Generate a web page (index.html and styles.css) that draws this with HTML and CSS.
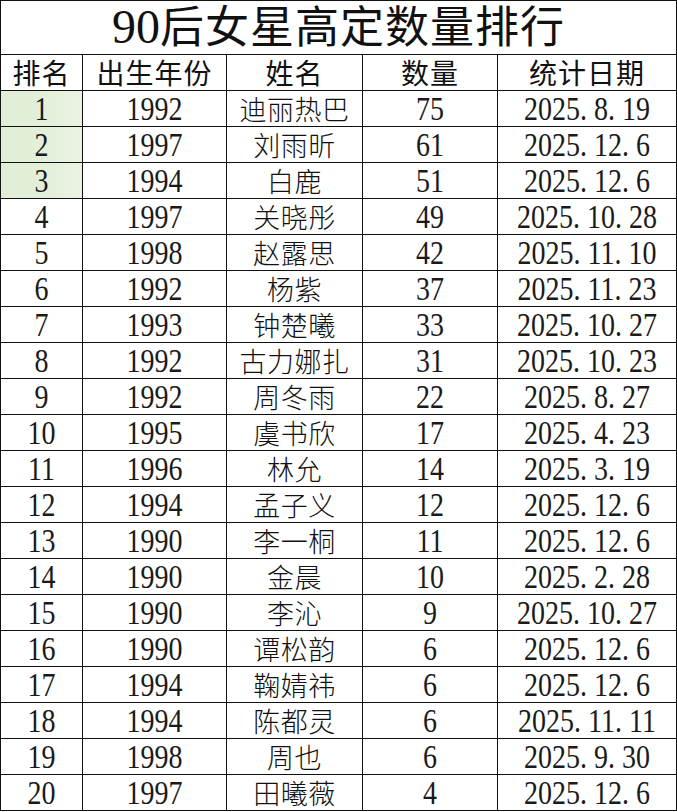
FILE: index.html
```html
<!DOCTYPE html>
<html lang="zh-CN">
<head>
<meta charset="utf-8">
<title>90后女星高定数量排行</title>
<link rel="stylesheet" href="styles.css">
</head>
<body>
<table class="rank">
  <colgroup>
    <col class="c-rank"><col class="c-year"><col class="c-name"><col class="c-count"><col class="c-date">
  </colgroup>
  <tr class="title-row"><td colspan="5" class="title"><span class="tnum">90</span>后女星高定数量排行</td></tr>
  <tr class="head"><th>排名</th><th>出生年份</th><th>姓名</th><th>数量</th><th>统计日期</th></tr>
  <tr><td class="hl"><span class="n">1</span></td><td><span class="n">1992</span></td><td class="nm">迪丽热巴</td><td><span class="n">75</span></td><td><span class="n">2025. 8. 19</span></td></tr>
  <tr><td class="hl"><span class="n">2</span></td><td><span class="n">1997</span></td><td class="nm">刘雨昕</td><td><span class="n">61</span></td><td><span class="n">2025. 12. 6</span></td></tr>
  <tr><td class="hl"><span class="n">3</span></td><td><span class="n">1994</span></td><td class="nm">白鹿</td><td><span class="n">51</span></td><td><span class="n">2025. 12. 6</span></td></tr>
  <tr><td><span class="n">4</span></td><td><span class="n">1997</span></td><td class="nm">关晓彤</td><td><span class="n">49</span></td><td><span class="n">2025. 10. 28</span></td></tr>
  <tr><td><span class="n">5</span></td><td><span class="n">1998</span></td><td class="nm">赵露思</td><td><span class="n">42</span></td><td><span class="n">2025. 11. 10</span></td></tr>
  <tr><td><span class="n">6</span></td><td><span class="n">1992</span></td><td class="nm">杨紫</td><td><span class="n">37</span></td><td><span class="n">2025. 11. 23</span></td></tr>
  <tr><td><span class="n">7</span></td><td><span class="n">1993</span></td><td class="nm">钟楚曦</td><td><span class="n">33</span></td><td><span class="n">2025. 10. 27</span></td></tr>
  <tr><td><span class="n">8</span></td><td><span class="n">1992</span></td><td class="nm">古力娜扎</td><td><span class="n">31</span></td><td><span class="n">2025. 10. 23</span></td></tr>
  <tr><td><span class="n">9</span></td><td><span class="n">1992</span></td><td class="nm">周冬雨</td><td><span class="n">22</span></td><td><span class="n">2025. 8. 27</span></td></tr>
  <tr><td><span class="n">10</span></td><td><span class="n">1995</span></td><td class="nm">虞书欣</td><td><span class="n">17</span></td><td><span class="n">2025. 4. 23</span></td></tr>
  <tr><td><span class="n">11</span></td><td><span class="n">1996</span></td><td class="nm">林允</td><td><span class="n">14</span></td><td><span class="n">2025. 3. 19</span></td></tr>
  <tr><td><span class="n">12</span></td><td><span class="n">1994</span></td><td class="nm">孟子义</td><td><span class="n">12</span></td><td><span class="n">2025. 12. 6</span></td></tr>
  <tr><td><span class="n">13</span></td><td><span class="n">1990</span></td><td class="nm">李一桐</td><td><span class="n">11</span></td><td><span class="n">2025. 12. 6</span></td></tr>
  <tr><td><span class="n">14</span></td><td><span class="n">1990</span></td><td class="nm">金晨</td><td><span class="n">10</span></td><td><span class="n">2025. 2. 28</span></td></tr>
  <tr><td><span class="n">15</span></td><td><span class="n">1990</span></td><td class="nm">李沁</td><td><span class="n">9</span></td><td><span class="n">2025. 10. 27</span></td></tr>
  <tr><td><span class="n">16</span></td><td><span class="n">1990</span></td><td class="nm">谭松韵</td><td><span class="n">6</span></td><td><span class="n">2025. 12. 6</span></td></tr>
  <tr><td><span class="n">17</span></td><td><span class="n">1994</span></td><td class="nm">鞠婧祎</td><td><span class="n">6</span></td><td><span class="n">2025. 12. 6</span></td></tr>
  <tr><td><span class="n">18</span></td><td><span class="n">1994</span></td><td class="nm">陈都灵</td><td><span class="n">6</span></td><td><span class="n">2025. 11. 11</span></td></tr>
  <tr><td><span class="n">19</span></td><td><span class="n">1998</span></td><td class="nm">周也</td><td><span class="n">6</span></td><td><span class="n">2025. 9. 30</span></td></tr>
  <tr><td><span class="n">20</span></td><td><span class="n">1997</span></td><td class="nm">田曦薇</td><td><span class="n">4</span></td><td><span class="n">2025. 12. 6</span></td></tr>
</table>
</body>
</html>
```
FILE: styles.css
```css
html, body {
  margin: 0;
  padding: 0;
  background: #ffffff;
}

.rank {
  border-collapse: collapse;
  table-layout: fixed;
  width: 676px;
  color: #111;
  font-family: "Liberation Serif", "Noto Sans CJK SC", serif;
  font-size: 28px;
}

.c-rank { width: 82px; }
.c-year { width: 144px; }
.c-name { width: 136px; }
.c-count { width: 135px; }
.c-date { width: 179px; }

.rank td, .rank th {
  border: 1px solid #111;
  padding: 0;
  text-align: center;
  vertical-align: middle;
  white-space: nowrap;
  line-height: 1.1;
}

.rank tr {
  height: 36px;
}

.rank .title-row {
  height: 54px;
}

.title {
  font-size: 44px;
  font-family: "Liberation Serif", "Noto Sans CJK SC", serif;
  letter-spacing: 1px;
  padding-top: 2px;
}

.tnum {
  font-family: "Liberation Serif", serif;
  font-size: 48px;
  letter-spacing: 0;
}

.head th {
  font-weight: 400;
  font-size: 28px;
  font-family: "Noto Sans CJK SC", sans-serif;
  letter-spacing: 1px;
  line-height: 1.05;
  padding-top: 1px;
}

.nm {
  font-family: "Noto Sans CJK SC", sans-serif;
  font-weight: 300;
  font-size: 27px;
  letter-spacing: 0.5px;
}

.n {
  display: inline-block;
  transform: scaleY(1.18);
  padding-top: 1px;
  color: #1a1a1a;
}

.hl {
  background: linear-gradient(90deg, #dfeed5 0%, #e3f0da 60%, #e9f3e2 100%);
}
```
